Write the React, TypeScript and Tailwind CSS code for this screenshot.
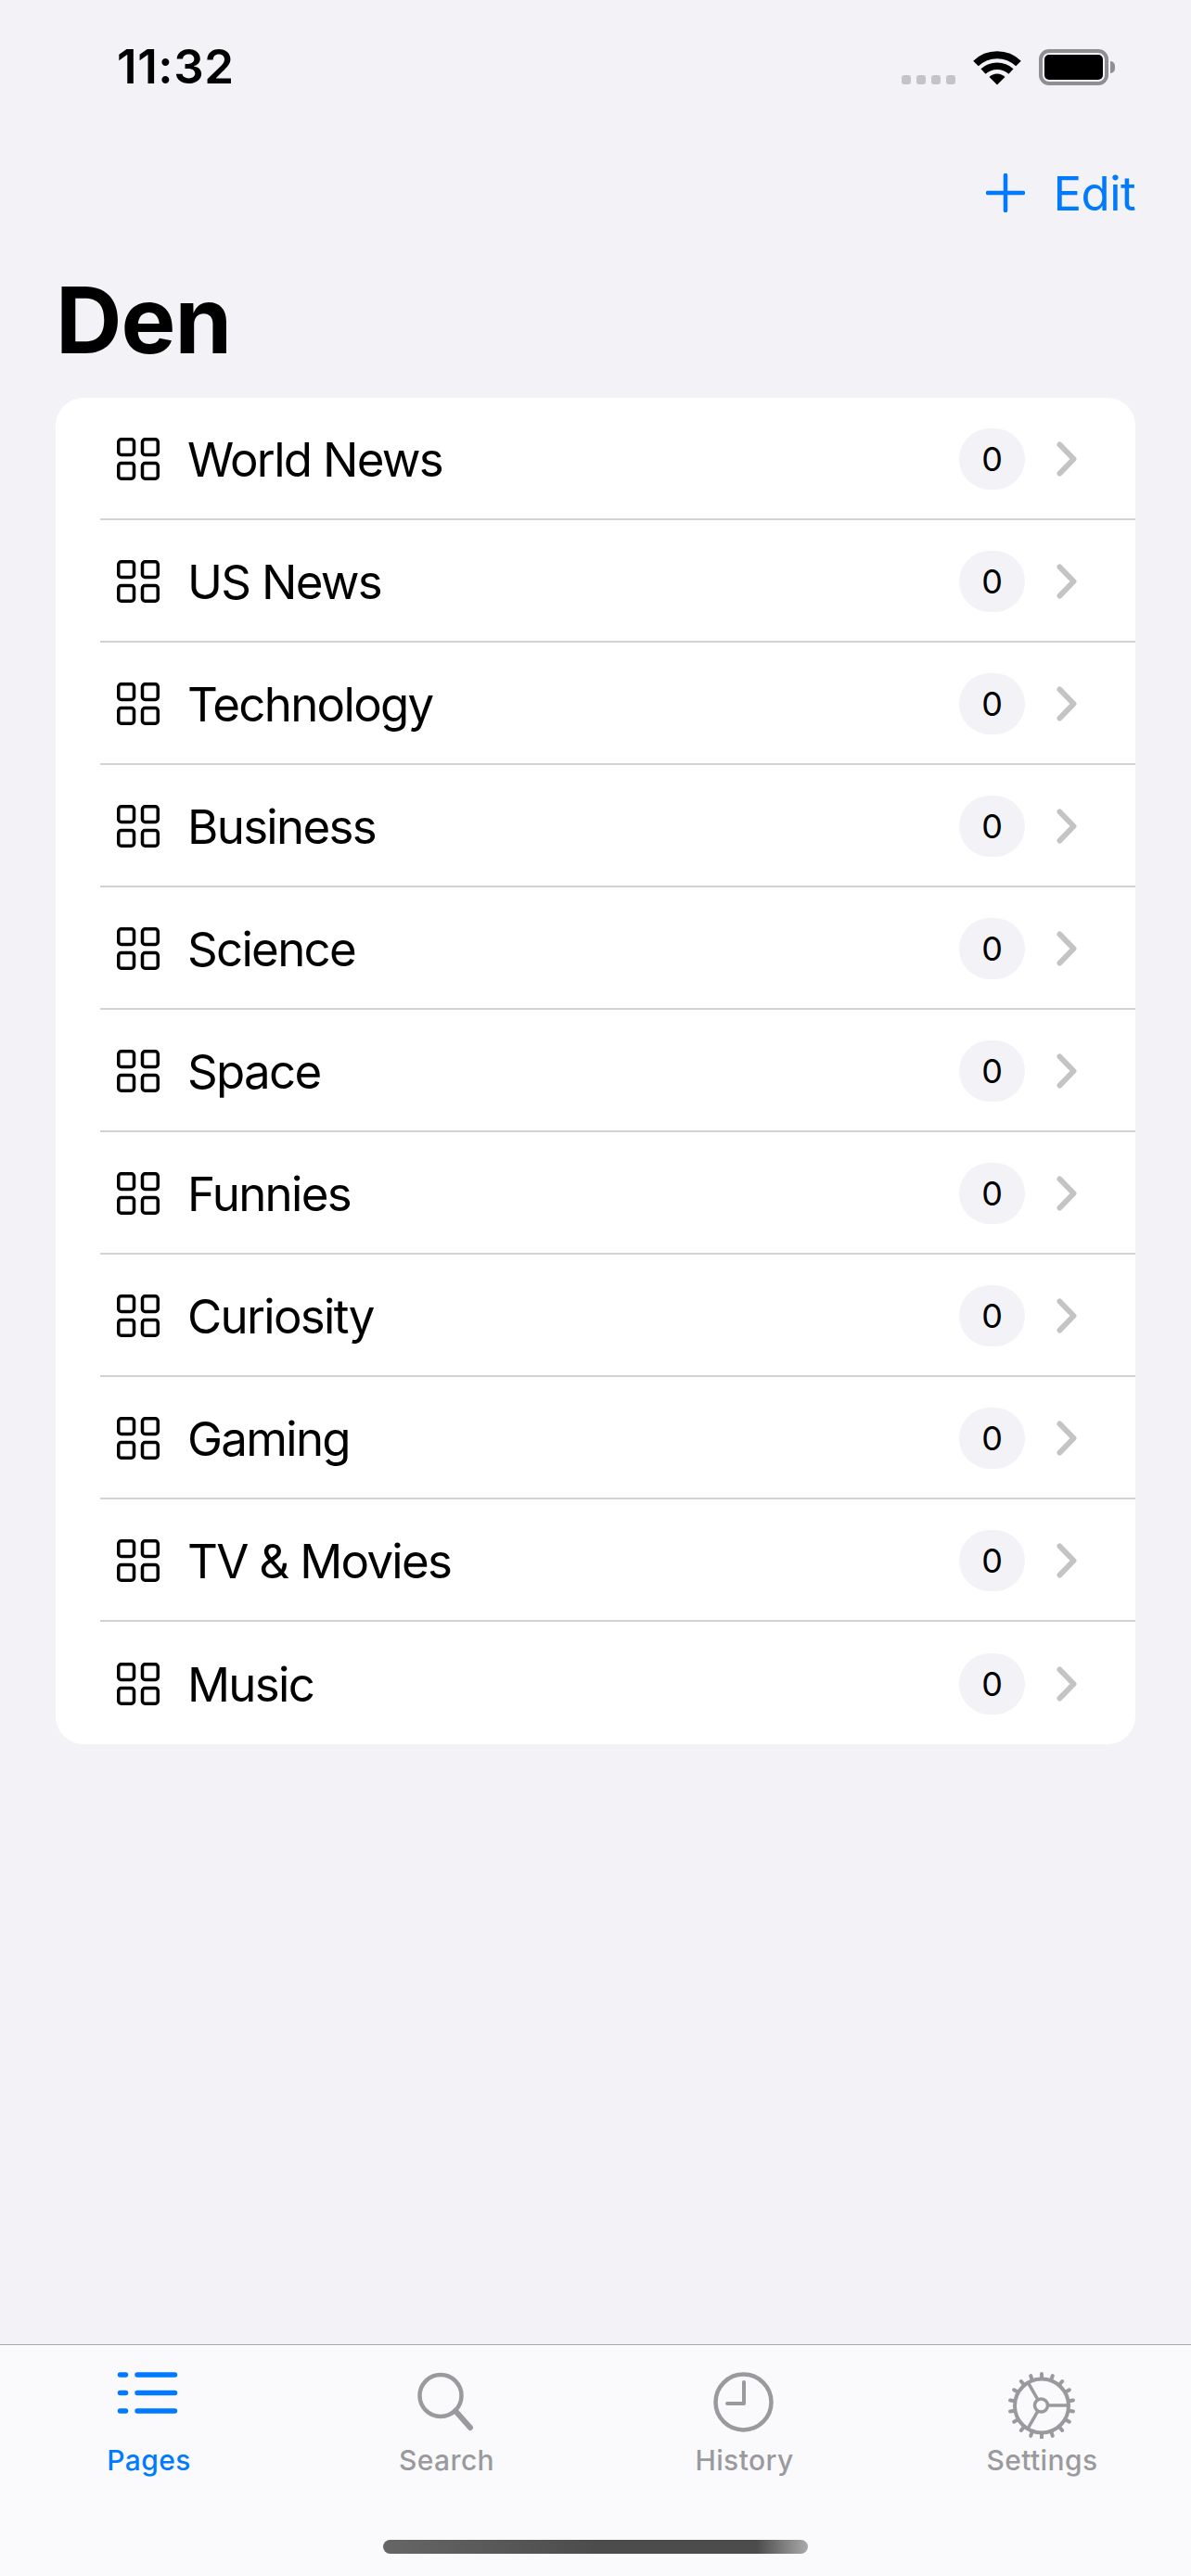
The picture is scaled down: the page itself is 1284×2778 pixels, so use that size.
import React from 'react';

const pages = [
  'World News',
  'US News',
  'Technology',
  'Business',
  'Science',
  'Space',
  'Funnies',
  'Curiosity',
  'Gaming',
  'TV & Movies',
  'Music',
];

const WifiIcon = () => (
  <svg width="52" height="38" viewBox="0 0 52 38">
    <path d="M3 14.5A33 33 0 0 1 49 14.5" fill="none" stroke="#000" strokeWidth="8" />
    <path d="M11 23A22.5 22.5 0 0 1 41 23" fill="none" stroke="#000" strokeWidth="7.5" />
    <path d="M26 37.5L17.5 29A12 12 0 0 1 34.5 29Z" fill="#000" />
  </svg>
);

const GridIcon = () => (
  <svg width="46" height="46" viewBox="0 0 46 46" fill="none" stroke="#000" strokeWidth="3.5">
    <rect x="1.75" y="1.75" width="16.75" height="16.75" rx="3" />
    <rect x="27.5" y="1.75" width="16.75" height="16.75" rx="3" />
    <rect x="1.75" y="27.5" width="16.75" height="16.75" rx="3" />
    <rect x="27.5" y="27.5" width="16.75" height="16.75" rx="3" />
  </svg>
);

const Chevron = () => (
  <svg width="22" height="38" viewBox="0 0 22 38" fill="none" stroke="#c4c4c7" strokeWidth="6" strokeLinecap="round" strokeLinejoin="round">
    <path d="M3.5 3.5L18.5 19L3.5 34.5" />
  </svg>
);

const PagesIcon = () => (
  <svg width="81" height="76" viewBox="0 0 81 76" stroke="#007aff" strokeWidth="5.5" strokeLinecap="round">
    <path d="M9.5 7H15.5M9.5 26.5H15.5M9.5 46H15.5" />
    <path d="M28 7H68.5M28 26.5H68.5M28 46H68.5" />
  </svg>
);

const SearchIcon = () => (
  <svg width="81" height="76" viewBox="0 0 81 76" fill="none" stroke="#9a9a9e" strokeLinecap="round">
    <circle cx="34" cy="29.5" r="22.5" strokeWidth="4.5" />
    <path d="M50 46L66 64" strokeWidth="6" />
  </svg>
);

const HistoryIcon = () => (
  <svg width="81" height="76" viewBox="0 0 81 76" fill="none" stroke="#9a9a9e" strokeLinecap="round" strokeLinejoin="round">
    <circle cx="39.5" cy="36.5" r="30" strokeWidth="4.5" />
    <path d="M40 15V38H22" strokeWidth="4" />
  </svg>
);

const SettingsIcon = () => {
  const teeth = Array.from({ length: 18 }, (_, i) => ((i * 20 + 10) * Math.PI) / 180);
  const spokes = [0, 120, 240].map((d) => (d * Math.PI) / 180);
  return (
    <svg width="81" height="76" viewBox="0 0 81 76" fill="none" stroke="#9a9a9e">
      <circle cx="40" cy="40.5" r="29" strokeWidth="4" />
      {teeth.map((a, i) => (
        <line
          key={i}
          x1={40 + 30 * Math.cos(a)}
          y1={40.5 + 30 * Math.sin(a)}
          x2={40 + 34.5 * Math.cos(a)}
          y2={40.5 + 34.5 * Math.sin(a)}
          strokeWidth="4"
          strokeLinecap="round"
        />
      ))}
      <circle cx="39.5" cy="40" r="7" strokeWidth="3.5" />
      {spokes.map((a, i) => (
        <line
          key={i}
          x1={39.5 + 8 * Math.cos(a)}
          y1={40 + 8 * Math.sin(a)}
          x2={39.5 + 29 * Math.cos(a)}
          y2={40 + 29 * Math.sin(a)}
          strokeWidth="3.5"
        />
      ))}
    </svg>
  );
};

const tabs = [
  { label: 'Pages', icon: <PagesIcon />, active: true },
  { label: 'Search', icon: <SearchIcon />, active: false },
  { label: 'History', icon: <HistoryIcon />, active: false },
  { label: 'Settings', icon: <SettingsIcon />, active: false },
];

const App: React.FC = () => {
  return (
    <div className="flex h-[2778px] w-[1284px] flex-col overflow-hidden bg-[#f2f2f7] font-['Inter',sans-serif] text-black">
      {/* status bar */}
      <div className="flex h-[148px] items-start justify-between pl-[126px] pr-[82px] pt-[53px]">
        <span className="text-[51px] leading-[38px] font-semibold tracking-[0.6px]">11:32</span>
        <div className="flex items-start">
          <div className="mr-[19px] mt-[28px] flex gap-[6px]">
            <div className="h-[10px] w-[10px] rounded-[3px] bg-[#c4c4c8]" />
            <div className="h-[10px] w-[10px] rounded-[3px] bg-[#c4c4c8]" />
            <div className="h-[10px] w-[10px] rounded-[3px] bg-[#c4c4c8]" />
            <div className="h-[10px] w-[10px] rounded-[3px] bg-[#c4c4c8]" />
          </div>
          <div className="mr-[19px] mt-[1px]">
            <WifiIcon />
          </div>
          <div className="flex items-center">
            <div className="h-[39px] w-[75px] rounded-[11px] border-[4px] border-[#8e8e93] p-[2px]">
              <div className="h-full w-full rounded-[5px] bg-black" />
            </div>
            <div className="ml-[2px] h-[13px] w-[5px] rounded-r-full bg-[#8e8e93]" />
          </div>
        </div>
      </div>

      {/* nav */}
      <div className="flex h-[120px] items-center justify-end pr-[60px] text-[#007aff]">
        <svg width="42" height="42" viewBox="0 0 42 42" stroke="#007aff" strokeWidth="4.5" strokeLinecap="round" className="mr-[30px]">
          <path d="M21 2V40M2 21H40" />
        </svg>
        <span className="text-[51px] leading-none tracking-[-0.6px]">Edit</span>
      </div>

      {/* title */}
      <div className="h-[161px] pl-[60px] pt-[27px]">
        <h1 className="text-[99px] leading-[100px] font-bold tracking-[-1px]">Den</h1>
      </div>

      {/* list */}
      <div className="mx-[60px] overflow-hidden rounded-[30px] bg-white">
        {pages.map((name, i) => (
          <div key={name} className="ml-[48px] h-[132px]">
            <div
              className={`flex h-full items-center pl-[18px] pr-[63px] pt-[2px] ${
                i < pages.length - 1 ? 'border-b-2 border-[#d2d2d4]' : ''
              }`}
            >
              <GridIcon />
              <span className="ml-[30px] flex-1 text-[51px] leading-none tracking-[-1.7px]">{name}</span>
              <div className="flex h-[66px] w-[71px] items-center justify-center rounded-full bg-[#f2f2f7] text-[36px] leading-none">
                0
              </div>
              <div className="ml-[34px]">
                <Chevron />
              </div>
            </div>
          </div>
        ))}
      </div>

      {/* tab bar */}
      <div className="mt-auto h-[250px] border-t border-[#a9a9ad] bg-[#fafafc] pt-[25px]">
        <div className="grid grid-cols-4">
          {tabs.map((tab) => (
            <div key={tab.label} className="flex flex-col items-center">
              {tab.icon}
              <span
                className={`mt-[5px] text-[30px] leading-[36px] font-medium tracking-[0.4px] ${
                  tab.active ? 'text-[#007aff]' : 'text-[#9a9a9e]'
                }`}
              >
                {tab.label}
              </span>
            </div>
          ))}
        </div>
        <div className="mx-auto mt-[68px] h-[15px] w-[458px] rounded-full bg-[linear-gradient(90deg,#666_0%,#4c4c4c_50%,#4c4c4c_88%,#aaa_100%)]" />
      </div>
    </div>
  );
};

export default App;
